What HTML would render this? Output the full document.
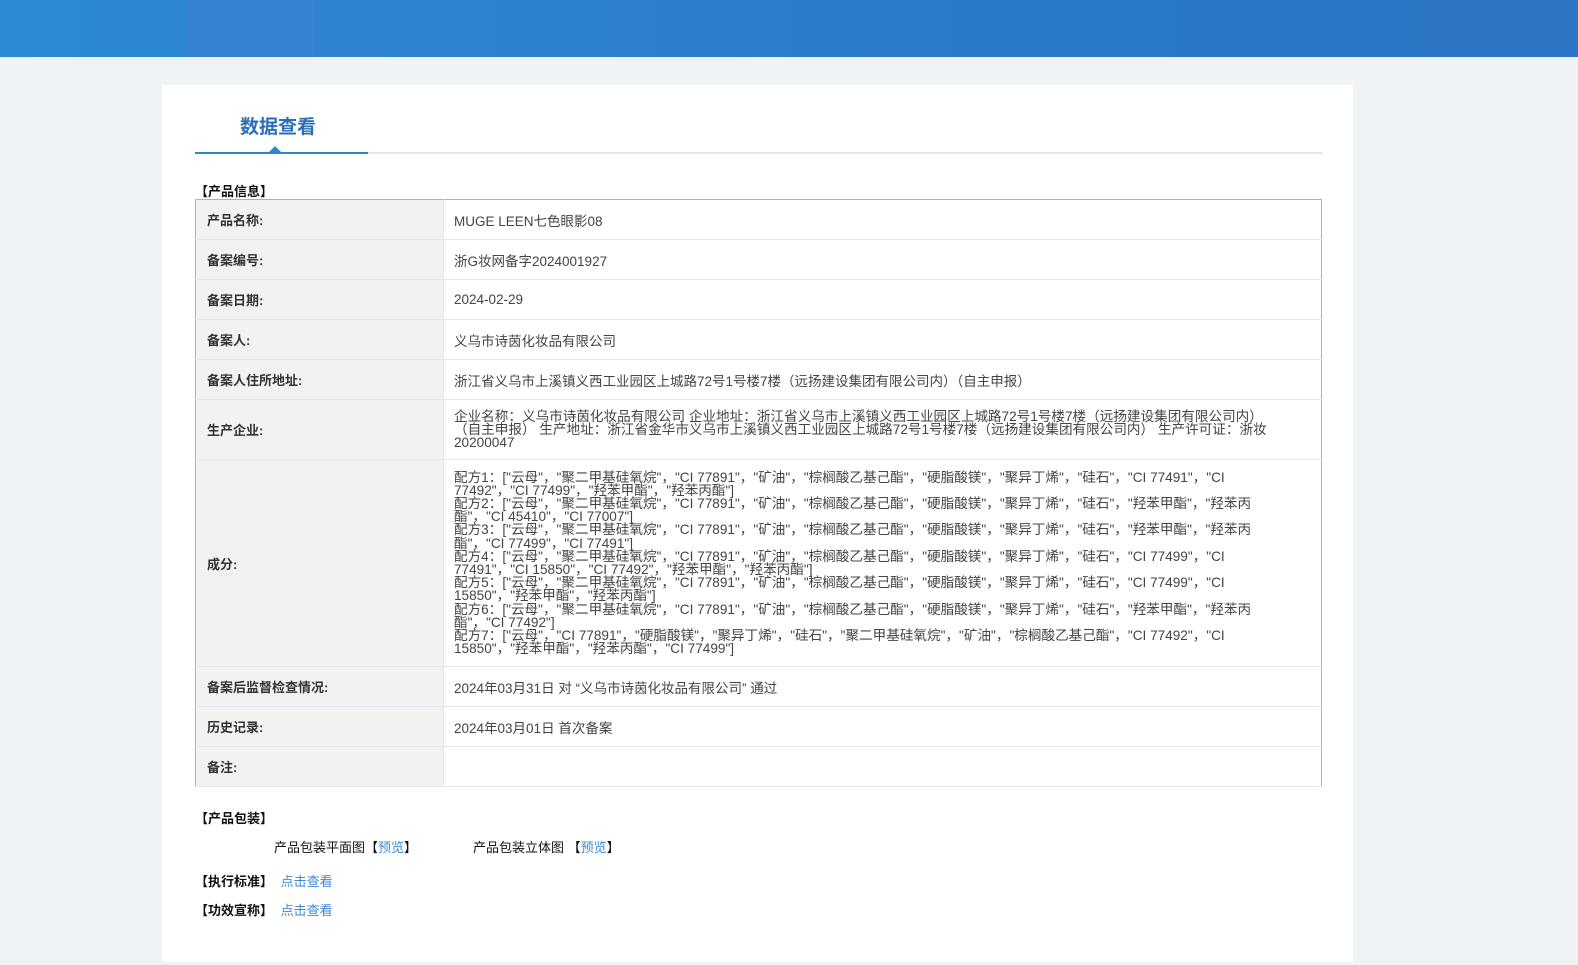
<!DOCTYPE html>
<html><head><meta charset="utf-8"><style>
*{margin:0;padding:0;box-sizing:border-box}
body{width:1578px;height:965px;background:#eff3f6;font-family:"Liberation Sans","Noto Sans CJK SC",sans-serif;font-size:13px;color:#333;position:relative;overflow:hidden}
.hdr{position:absolute;left:0;top:0;width:1578px;height:57px;background:linear-gradient(90deg,#2b8ad6 0%,#2e7fd0 40%,#2a78c8 70%,#2c74c4 100%)}
.hdr .b{position:absolute;left:185px;top:0;width:130px;height:57px;background:#3b82d6;opacity:.7}
.card{position:absolute;left:162px;top:85px;width:1191px;height:877px;background:#fff}
.tab{position:absolute;left:240px;top:112px;font-size:19px;font-weight:bold;color:#2a6fb5}
.line{position:absolute;left:195px;top:152px;width:1127px;height:2px;background:#e5e5e5}
.line2{position:absolute;left:195px;top:152px;width:173px;height:2px;background:#2b86d6}
.tri{position:absolute;left:269px;top:146px;width:0;height:0;border-left:6px solid transparent;border-right:6px solid transparent;border-bottom:6px solid #2b86d6}
.sec{position:absolute;font-weight:bold;color:#111}
table{position:absolute;left:195px;top:199px;width:1127px;border-collapse:collapse;border:1px solid #94b6e6}
td{border-bottom:1px solid #e4e8ee;vertical-align:middle}
td.l{width:248px;background:#f2f2f2;font-weight:bold;color:#333;padding-left:11px;border-right:1px solid #e4e8ee}
td.v{padding-left:10px;color:#444;font-size:13.5px}
.ml{line-height:13.2px;white-space:nowrap;font-size:13.6px}
a{color:#3d8ad6;text-decoration:none}
</style></head><body>
<div class="hdr"><div class="b"></div></div>
<div class="card"></div>
<div class="tab">数据查看</div>
<div class="line"></div><div class="line2"></div><div class="tri"></div>
<div class="sec" style="left:195px;top:181px">【产品信息】</div>
<table>
<tr style="height:40px"><td class="l">产品名称:</td><td class="v">MUGE LEEN七色眼影08</td></tr>
<tr style="height:40px"><td class="l">备案编号:</td><td class="v">浙G妆网备字2024001927</td></tr>
<tr style="height:40px"><td class="l">备案日期:</td><td class="v">2024-02-29</td></tr>
<tr style="height:40px"><td class="l">备案人:</td><td class="v">义乌市诗茵化妆品有限公司</td></tr>
<tr style="height:40px"><td class="l">备案人住所地址:</td><td class="v">浙江省义乌市上溪镇义西工业园区上城路72号1号楼7楼（远扬建设集团有限公司内）（自主申报）</td></tr>
<tr style="height:60px"><td class="l">生产企业:</td><td class="v"><div class="ml">企业名称：义乌市诗茵化妆品有限公司 企业地址：浙江省义乌市上溪镇义西工业园区上城路72号1号楼7楼（远扬建设集团有限公司内）<br>（自主申报） 生产地址：浙江省金华市义乌市上溪镇义西工业园区上城路72号1号楼7楼（远扬建设集团有限公司内） 生产许可证：浙妆<br>20200047</div></td></tr>
<tr style="height:207px"><td class="l">成分:</td><td class="v"><div class="ml">配方1：["云母"，"聚二甲基硅氧烷"，"CI 77891"，"矿油"，"棕榈酸乙基己酯"，"硬脂酸镁"，"聚异丁烯"，"硅石"，"CI 77491"，"CI<br>77492"，"CI 77499"，"羟苯甲酯"，"羟苯丙酯"]<br>配方2：["云母"，"聚二甲基硅氧烷"，"CI 77891"，"矿油"，"棕榈酸乙基己酯"，"硬脂酸镁"，"聚异丁烯"，"硅石"，"羟苯甲酯"，"羟苯丙<br>酯"，"CI 45410"，"CI 77007"]<br>配方3：["云母"，"聚二甲基硅氧烷"，"CI 77891"，"矿油"，"棕榈酸乙基己酯"，"硬脂酸镁"，"聚异丁烯"，"硅石"，"羟苯甲酯"，"羟苯丙<br>酯"，"CI 77499"，"CI 77491"]<br>配方4：["云母"，"聚二甲基硅氧烷"，"CI 77891"，"矿油"，"棕榈酸乙基己酯"，"硬脂酸镁"，"聚异丁烯"，"硅石"，"CI 77499"，"CI<br>77491"，"CI 15850"，"CI 77492"，"羟苯甲酯"，"羟苯丙酯"]<br>配方5：["云母"，"聚二甲基硅氧烷"，"CI 77891"，"矿油"，"棕榈酸乙基己酯"，"硬脂酸镁"，"聚异丁烯"，"硅石"，"CI 77499"，"CI<br>15850"，"羟苯甲酯"，"羟苯丙酯"]<br>配方6：["云母"，"聚二甲基硅氧烷"，"CI 77891"，"矿油"，"棕榈酸乙基己酯"，"硬脂酸镁"，"聚异丁烯"，"硅石"，"羟苯甲酯"，"羟苯丙<br>酯"，"CI 77492"]<br>配方7：["云母"，"CI 77891"，"硬脂酸镁"，"聚异丁烯"，"硅石"，"聚二甲基硅氧烷"，"矿油"，"棕榈酸乙基己酯"，"CI 77492"，"CI<br>15850"，"羟苯甲酯"，"羟苯丙酯"，"CI 77499"]</div></td></tr>
<tr style="height:40px"><td class="l">备案后监督检查情况:</td><td class="v">2024年03月31日 对 “义乌市诗茵化妆品有限公司” 通过</td></tr>
<tr style="height:40px"><td class="l">历史记录:</td><td class="v">2024年03月01日 首次备案</td></tr>
<tr style="height:40px"><td class="l">备注:</td><td class="v"></td></tr>
</table>
<div class="sec" style="left:195px;top:808px">【产品包装】</div>
<div style="position:absolute;left:274px;top:837px;color:#111">产品包装平面图【<a>预览</a>】</div>
<div style="position:absolute;left:473px;top:837px;color:#111">产品包装立体图 【<a>预览</a>】</div>
<div class="sec" style="left:195px;top:871px">【执行标准】 <a style="font-weight:normal;margin-left:4px">点击查看</a></div>
<div class="sec" style="left:195px;top:900px">【功效宣称】 <a style="font-weight:normal;margin-left:4px">点击查看</a></div>
</body></html>
